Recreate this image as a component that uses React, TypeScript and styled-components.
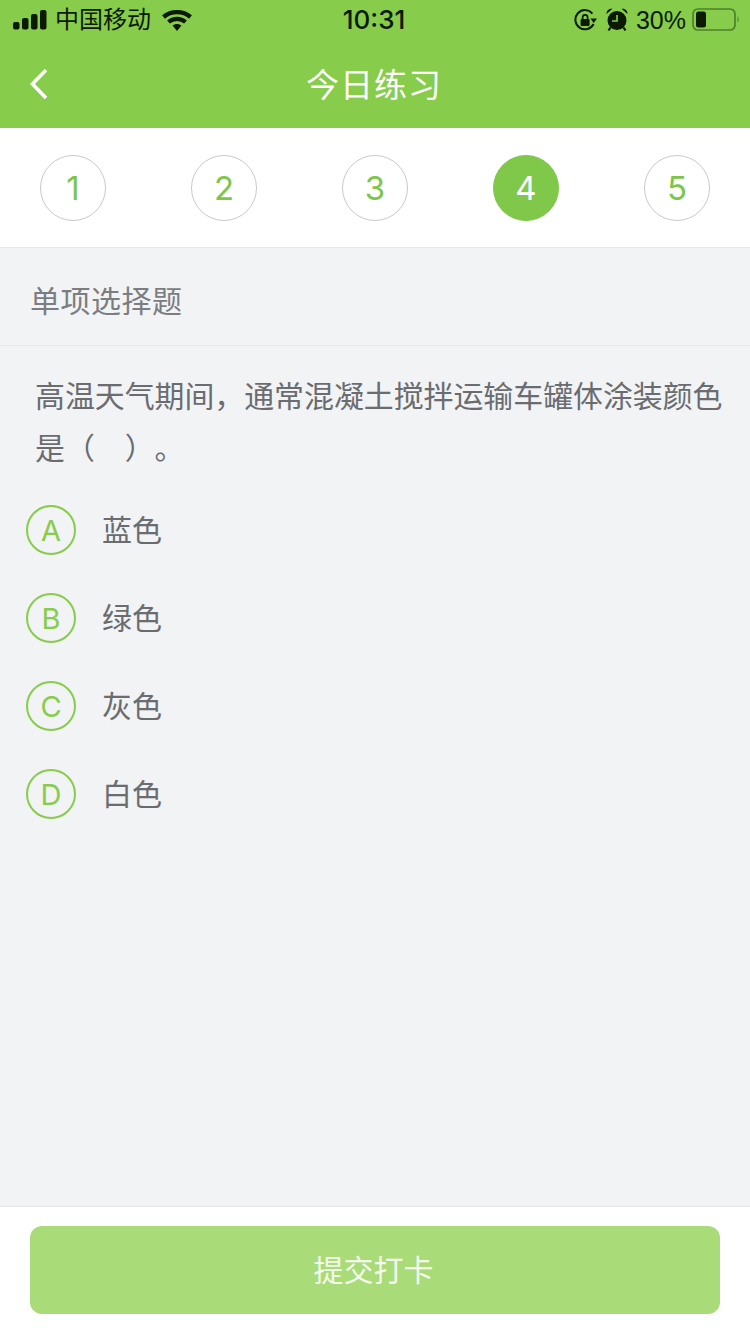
import React from 'react';
import styled, { createGlobalStyle } from 'styled-components';

const GlobalStyle = createGlobalStyle`
  html, body {
    margin: 0;
    padding: 0;
    background: #f1f3f5;
  }
  body {
    font-family: "Liberation Sans", "Noto Sans CJK SC", sans-serif;
  }
`;

const Page = styled.div`
  width: 750px;
  height: 1334px;
  display: flex;
  flex-direction: column;
  background: #f1f3f5;
  overflow: hidden;
`;

const TopBar = styled.div`
  background: #87cc4a;
  height: 128px;
  flex: none;
`;

const StatusBar = styled.div`
  height: 40px;
  display: grid;
  grid-template-columns: 1fr auto 1fr;
  align-items: center;
  padding: 0 10px 0 12px;
  color: #0c1a02;
`;

const StatusLeft = styled.div`
  display: flex;
  align-items: center;
`;

const Carrier = styled.span`
  font-size: 24px;
  margin-left: 8px;
  line-height: 40px;
`;

const Clock = styled.span`
  font-family: Inter, "Liberation Sans", sans-serif;
  font-size: 26px;
  font-weight: 500;
  margin: 0 4px 1px 0;
`;

const StatusRight = styled.div`
  display: flex;
  align-items: center;
  justify-content: flex-end;
`;

const Percent = styled.span`
  font-family: "Liberation Sans", sans-serif;
  font-size: 25px;
  margin: 0 6px 0 8px;
`;

const NavBar = styled.div`
  position: relative;
  height: 88px;
  display: flex;
  align-items: center;
  justify-content: center;
`;

const BackIcon = styled.svg`
  position: absolute;
  left: 29px;
  top: 27px;
`;

const NavTitle = styled.h1`
  margin: 0 2px 2px 0;
  font-size: 33px;
  font-weight: 400;
  color: #fff;
  letter-spacing: 1px;
`;

const Steps = styled.div`
  height: 119px;
  flex: none;
  background: #fff;
  border-bottom: 1px solid #e6e7e9;
  display: flex;
  align-items: center;
  justify-content: space-between;
  padding: 0 40px;
`;

const Step = styled.div<{ $active?: boolean }>`
  width: 66px;
  height: 66px;
  box-sizing: border-box;
  border-radius: 50%;
  border: 1px solid ${p => (p.$active ? '#7fc84a' : '#c9c9c9')};
  background: ${p => (p.$active ? '#7fc84a' : '#fff')};
  color: ${p => (p.$active ? '#fff' : '#7ec64a')};
  font-family: Inter, "Liberation Sans", sans-serif;
  font-size: 33px;
  font-weight: 400;
  display: flex;
  align-items: center;
  justify-content: center;
`;

const SectionTitle = styled.div`
  height: 98px;
  flex: none;
  box-sizing: border-box;
  border-bottom: 1px solid #e6e7e9;
  padding: 4px 0 0 30px;
  display: flex;
  align-items: center;
  font-size: 30px;
  color: #7b7d80;
  letter-spacing: 0.5px;
`;

const Question = styled.div`
  padding: 25px 20px 0 35px;
  font-size: 29.9px;
  line-height: 52px;
  color: #6a6c6f;
  text-spacing-trim: space-all;
`;

const Options = styled.div`
  flex: 1;
  padding: 11px 0 0 26px;
`;

const Option = styled.div`
  height: 88px;
  display: flex;
  align-items: center;
`;

const OptionBadge = styled.div`
  width: 50px;
  height: 50px;
  box-sizing: border-box;
  border: 2px solid #87cc4a;
  border-radius: 50%;
  color: #87cc4a;
  font-family: Inter, "Liberation Sans", sans-serif;
  font-size: 29px;
  font-weight: 400;
  display: flex;
  align-items: center;
  justify-content: center;
`;

const OptionText = styled.span`
  margin: 0 0 4px 26px;
  font-size: 30px;
  color: #6a6c6f;
`;

const Footer = styled.div`
  height: 128px;
  flex: none;
  box-sizing: border-box;
  background: #fff;
  border-top: 1px solid #e6e7e9;
  padding: 19px 30px 20px;
`;

const SubmitButton = styled.button`
  width: 100%;
  height: 88px;
  padding: 0 3px 4px 0;
  border: 0;
  border-radius: 12px;
  background: #a9dc78;
  color: rgba(255, 255, 255, 0.9);
  font-family: inherit;
  font-size: 30px;
`;

const steps = [1, 2, 3, 4, 5];
const options = [
  { key: 'A', label: '蓝色' },
  { key: 'B', label: '绿色' },
  { key: 'C', label: '灰色' },
  { key: 'D', label: '白色' },
];

const SignalIcon = () => (
  <svg width="35" height="20" viewBox="0 0 35 20">
    <rect x="1" y="12" width="6.5" height="7.5" rx="2" fill="#0c1a02" />
    <rect x="10" y="8" width="6.5" height="11.5" rx="2" fill="#0c1a02" />
    <rect x="19" y="4" width="6.5" height="15.5" rx="2" fill="#0c1a02" />
    <rect x="28" y="0" width="6.5" height="19.5" rx="2" fill="#0c1a02" />
  </svg>
);

const WifiIcon = () => (
  <svg width="30" height="22" viewBox="0 0 30 22" style={{ marginLeft: 11 }}>
    <path d="M1.5 8C9 1.5 21 1.5 28.5 8" fill="none" stroke="#0c1a02" strokeWidth="4.4" />
    <path d="M6.5 13C11.5 8.8 18.5 8.8 23.5 13" fill="none" stroke="#0c1a02" strokeWidth="4.2" />
    <path d="M10.5 16.5L15 22L19.5 16.5C17 14.4 13 14.4 10.5 16.5Z" fill="#0c1a02" />
  </svg>
);

const RotationLockIcon = () => (
  <svg width="23" height="23" viewBox="0 0 23 23">
    <path d="M19.6 15A9.6 9.6 0 1 1 18.4 4.6" fill="none" stroke="#0c1a02" strokeWidth="2" />
    <path d="M16.4 9.4L23 9.4L19.7 14Z" fill="#0c1a02" />
    <rect x="6.6" y="10" width="9" height="7" rx="1" fill="#0c1a02" />
    <path d="M8.6 10.5V8.4a2.5 2.5 0 0 1 5 0V10.5" fill="none" stroke="#0c1a02" strokeWidth="1.7" />
  </svg>
);

const AlarmIcon = () => (
  <svg width="22" height="24" viewBox="0 0 22 24" style={{ marginLeft: 9 }}>
    <circle cx="11" cy="12.5" r="9.5" fill="#0c1a02" />
    <path d="M0.5 6C0.5 2.5 3 0 6.5 0.8Z M21.5 6C21.5 2.5 19 0 15.5 0.8Z" fill="#0c1a02" />
    <path d="M4.5 19.5L2.5 22.5M17.5 19.5L19.5 22.5" stroke="#0c1a02" strokeWidth="2.2" />
    <path d="M11 7V13H6" fill="none" stroke="#87cc4a" strokeWidth="1.6" />
  </svg>
);

const BatteryIcon = () => (
  <svg width="48" height="24" viewBox="0 0 48 24">
    <rect x="1" y="1" width="42" height="21" rx="5" fill="none" stroke="#4f7f2b" strokeWidth="1.7" />
    <rect x="4" y="3.5" width="10" height="16" rx="2.5" fill="#0c1a02" />
    <path d="M45.5 8.5C47 9.5 47 13.5 45.5 14.5Z" fill="#4f7f2b" />
  </svg>
);

const App: React.FC = () => {
  return (
    <Page>
      <GlobalStyle />
      <TopBar>
        <StatusBar>
          <StatusLeft>
            <SignalIcon />
            <Carrier>中国移动</Carrier>
            <WifiIcon />
          </StatusLeft>
          <Clock>10:31</Clock>
          <StatusRight>
            <RotationLockIcon />
            <AlarmIcon />
            <Percent>30%</Percent>
            <BatteryIcon />
          </StatusRight>
        </StatusBar>
        <NavBar>
          <BackIcon width="20" height="34" viewBox="0 0 20 34">
            <path d="M17 3L3.5 17L17 31" fill="none" stroke="#fff" strokeWidth="3.6" />
          </BackIcon>
          <NavTitle>今日练习</NavTitle>
        </NavBar>
      </TopBar>
      <Steps>
        {steps.map(n => (
          <Step key={n} $active={n === 4}>
            {n}
          </Step>
        ))}
      </Steps>
      <SectionTitle>单项选择题</SectionTitle>
      <Question>高温天气期间，通常混凝土搅拌运输车罐体涂装颜色是（　）。</Question>
      <Options>
        {options.map(o => (
          <Option key={o.key}>
            <OptionBadge>{o.key}</OptionBadge>
            <OptionText>{o.label}</OptionText>
          </Option>
        ))}
      </Options>
      <Footer>
        <SubmitButton>提交打卡</SubmitButton>
      </Footer>
    </Page>
  );
};

export default App;
